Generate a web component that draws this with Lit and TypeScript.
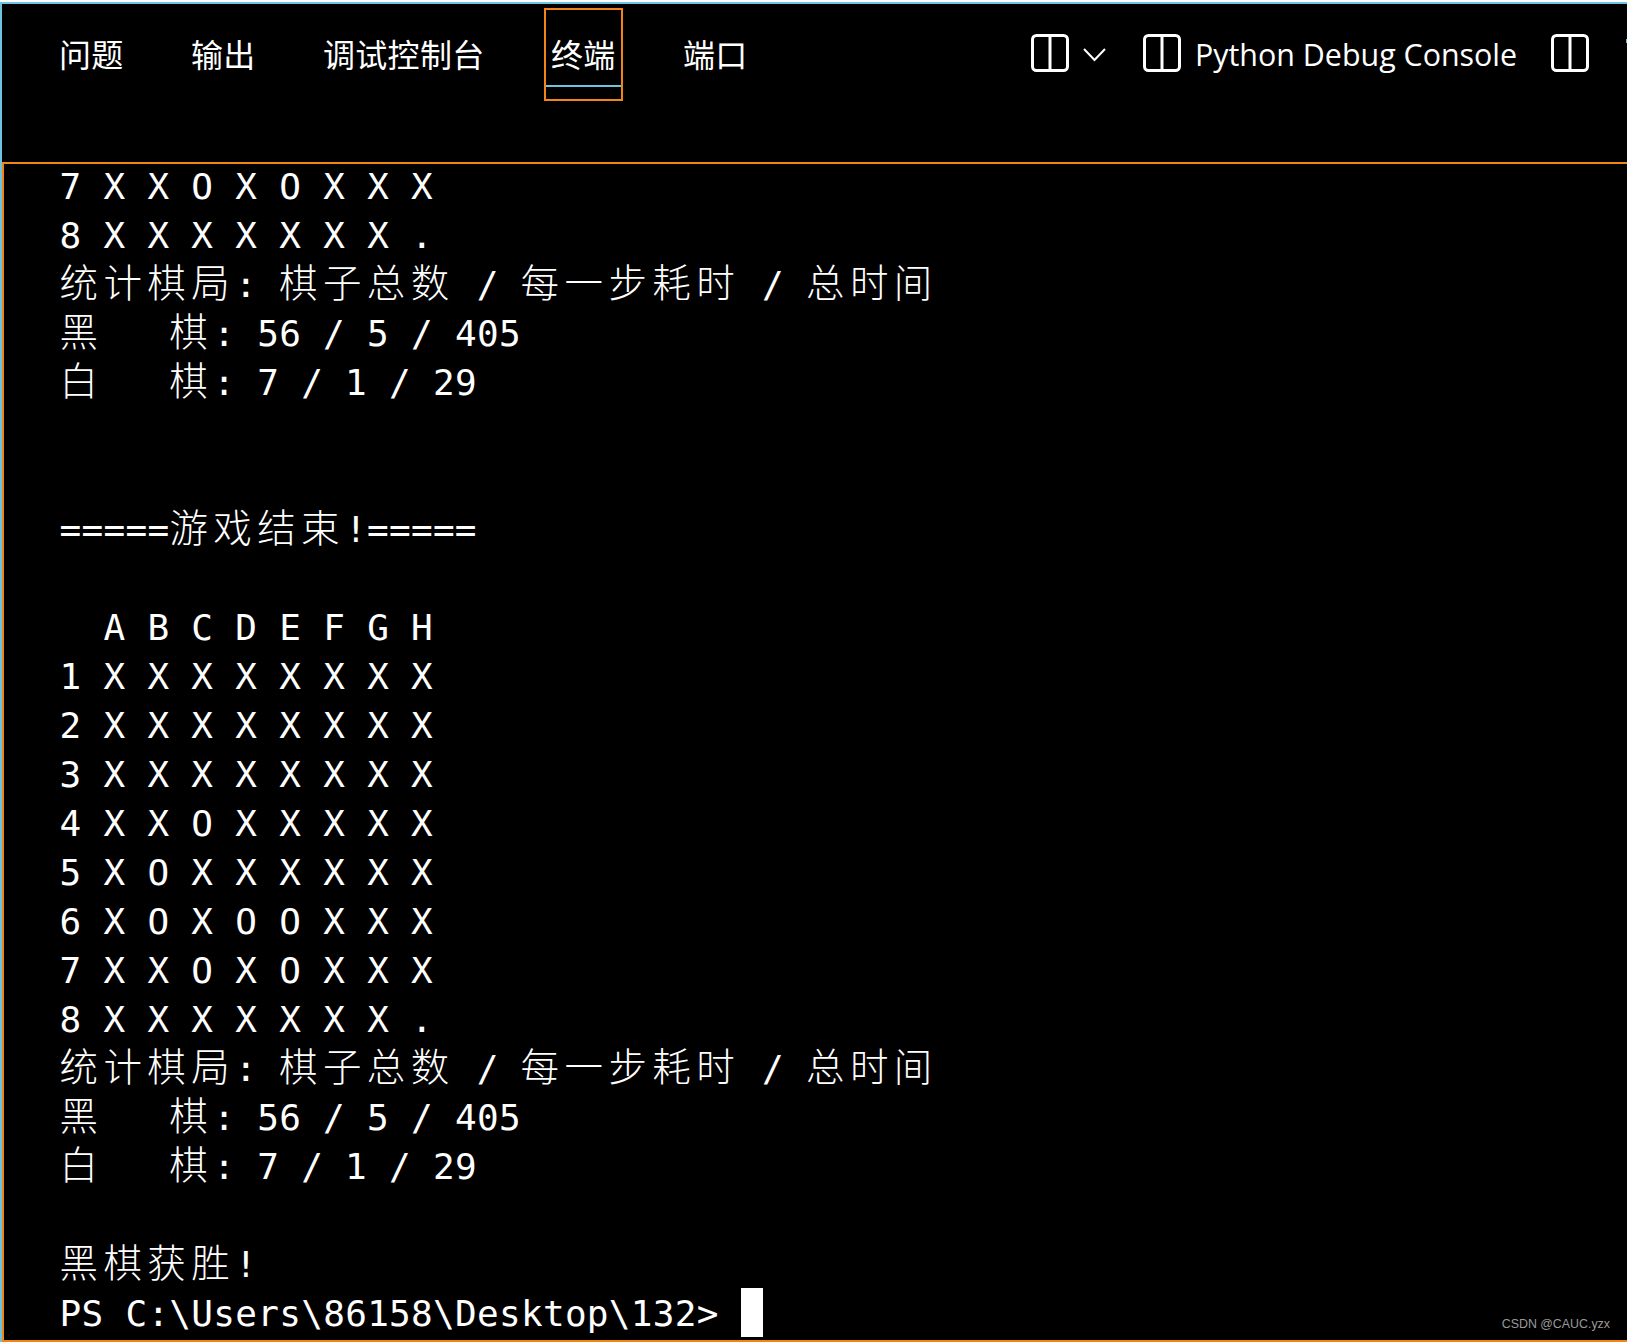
import { LitElement, html, css, svg } from "lit";
import { customElement } from "lit/decorators.js";

const splitIcon = html`<svg class="split" viewBox="0 0 38 38" aria-hidden="true">
  ${svg`<rect x="1.5" y="1.5" width="35" height="35" rx="4" fill="none" stroke="#fff" stroke-width="3"/>
  <line x1="19" y1="1" x2="19" y2="37" stroke="#fff" stroke-width="3"/>`}
</svg>`;

const board = [
  "  A B C D E F G H",
  "1 X X X X X X X X",
  "2 X X X X X X X X",
  "3 X X X X X X X X",
  "4 X X O X X X X X",
  "5 X O X X X X X X",
  "6 X O X O O X X X",
  "7 X X O X O X X X",
  "8 X X X X X X X .",
  "统计棋局: 棋子总数 / 每一步耗时 / 总时间",
  "黑   棋: 56 / 5 / 405",
  "白   棋: 7 / 1 / 29",
];

const lines = [
  "7 X X O X O X X X",
  "8 X X X X X X X .",
  "统计棋局: 棋子总数 / 每一步耗时 / 总时间",
  "黑   棋: 56 / 5 / 405",
  "白   棋: 7 / 1 / 29",
  "",
  "",
  "=====游戏结束!=====",
  "",
  ...board,
  "",
  "黑棋获胜!",
  "PS C:\\Users\\86158\\Desktop\\132> ",
];

const runs = (line: string) =>
  (line.match(/[\u4e00-\u9fff]+|[^\u4e00-\u9fff]+/g) || []).map((r) =>
    /[\u4e00-\u9fff]/.test(r)
      ? html`<span class="cjk">${r}</span>`
      : html`<span class="asc">${r}</span>`
  );

@customElement("app-root")
export class AppRoot extends LitElement {
  static styles = css`
    :host {
      display: block;
      height: 1342px;
      background: #000;
      color: #fff;
      overflow: hidden;
      position: relative;
    }
    .frame {
      height: 1342px;
      box-sizing: border-box;
      display: flex;
      flex-direction: column;
    }
    .edge {
      height: 2px;
      background: #fff;
      flex: none;
    }
    .body {
      flex: 1;
      min-height: 0;
      display: flex;
      flex-direction: column;
      border-top: 2px solid #6fc3df;
      border-left: 2px solid #6fc3df;
    }
    .header {
      flex: none;
      height: 158px;
      box-sizing: border-box;
      display: flex;
      align-items: flex-start;
      padding: 4px 38px 0 50px;
      gap: 53px;
      position: relative;
    }
    .tab {
      width: 79px;
      height: 93px;
      box-sizing: border-box;
      border: 2px solid transparent;
      padding: 0 7px 0 5px;
      flex: none;
      display: flex;
      flex-direction: column;
    }
    .tab.wide {
      width: 175px;
    }
    .tab .label {
      font: 400 32px/40px "Noto Sans CJK SC", sans-serif;
      letter-spacing: 0.3px;
      padding: 23px 0 12px;
      white-space: nowrap;
    }
    .tab.active {
      border-color: #f38518;
    }
    .tab .bar {
      height: 2px;
      margin: 0 -7px 0 -5px;
    }
    .tab.active .bar {
      background: #6fc3df;
    }
    .actions {
      margin-left: auto;
      display: flex;
      align-items: center;
      height: 38px;
      margin-top: 26px;
    }
    .split {
      width: 38px;
      height: 38px;
      display: block;
      flex: none;
    }
    .chev {
      width: 23px;
      height: 14px;
      margin: 3px 37px 0 14px;
      display: block;
      flex: none;
    }
    .console {
      font: 400 30.4px/38px "Open Sans", sans-serif;
      margin: 4px 34px 0 14px;
      width: 322px;
      white-space: nowrap;
    }
    .tick {
      position: absolute;
      right: 0;
      top: 35px;
      width: 1px;
      height: 4px;
      background: #6fc3df;
    }
    .term {
      flex: 1;
      min-height: 0;
      box-sizing: border-box;
      border-top: 2px solid #f38518;
      border-left: 2px solid #f38518;
      border-bottom: 2px solid #f38518;
      padding-left: 55.5px;
      overflow: hidden;
    }
    .row {
      height: 49px;
      line-height: 49px;
      white-space: pre;
      font-size: 36px;
      font-family: "DejaVu Sans Mono", monospace;
    }
    .row:first-child {
      margin-top: -2px;
    }
    .asc {
      letter-spacing: 0.3px;
    }
    .cjk {
      font-family: "Noto Sans CJK SC", sans-serif;
      font-weight: 300;
      font-size: 38.5px;
      line-height: 1;
      letter-spacing: 5.4px;
    }
    .cursor {
      display: inline-block;
      width: 22px;
      height: 49px;
      background: #fff;
      vertical-align: top;
      margin-top: -1px;
    }
    .mark {
      position: absolute;
      right: 17px;
      bottom: 10px;
      font: 400 12.4px/16px "Liberation Sans", sans-serif;
      color: #9a9a9a;
    }
  `;

  render() {
    const tabs = ["问题", "输出", "调试控制台", "终端", "端口"];
    return html`
      <div class="frame">
        <div class="edge"></div>
        <div class="body">
          <div class="header">
            ${tabs.map(
              (t, i) => html`<div class="tab ${t.length > 2 ? "wide" : ""} ${i === 3 ? "active" : ""}">
                <div class="label">${t}</div>
                <div class="bar"></div>
              </div>`
            )}
            <div class="actions">
              ${splitIcon}
              <svg class="chev" viewBox="0 0 23 14" aria-hidden="true">
                ${svg`<polyline points="1,1 11.5,12 22,1" fill="none" stroke="#fff" stroke-width="2"/>`}
              </svg>
              ${splitIcon}
              <div class="console">Python Debug Console</div>
              ${splitIcon}
            </div>
            <div class="tick"></div>
          </div>
          <div class="term">
            ${lines.map(
              (l, i) => html`<div class="row">${runs(l)}${i === lines.length - 1 ? html`<span class="cursor"></span>` : ""}</div>`
            )}
          </div>
        </div>
      </div>
      <div class="mark">CSDN @CAUC.yzx</div>
    `;
  }
}
